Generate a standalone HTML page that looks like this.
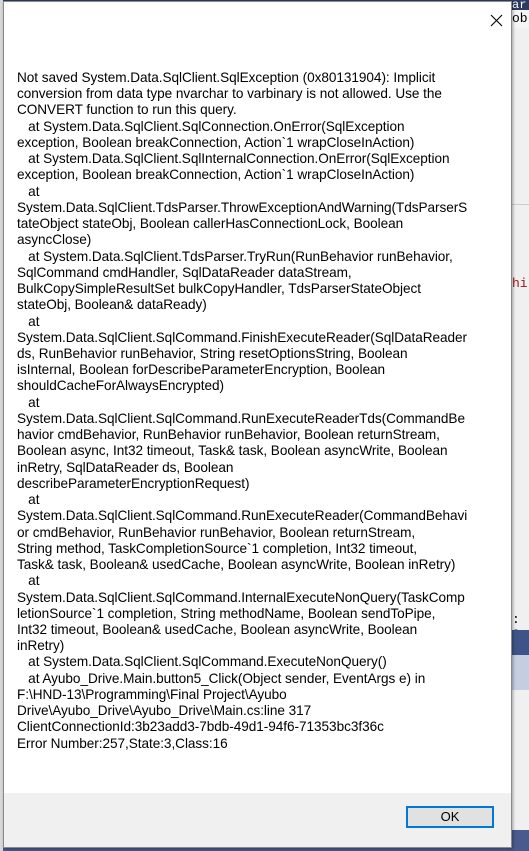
<!DOCTYPE html>
<html><head><meta charset="utf-8"><style>
html,body{margin:0;padding:0;width:529px;height:851px;overflow:hidden;background:#f0f0f0;position:relative}
.bg{position:absolute}
.dlg{position:absolute;left:3px;top:1px;width:509px;height:847px;background:#fff;border:1px solid #8a8a8a;box-sizing:border-box;box-shadow:1px 1px 3px rgba(0,0,0,.35)}
.foot{position:absolute;left:0;right:0;bottom:0;height:54px;background:#f0f0f0}
.ok{position:absolute;left:402px;top:13px;width:88px;height:22px;border:2px solid #0078d7;background:#e1e1e1;box-sizing:border-box;font:13px "Liberation Sans",sans-serif;text-align:center;line-height:18px;color:#000}
.txt{position:absolute;left:13px;top:68px;font:13.6px "Liberation Sans",sans-serif;line-height:16.24px;color:#000;white-space:pre;letter-spacing:-0.05px}
</style></head><body>
<div class="bg" style="left:0;top:0;width:529px;height:10px;background:#2d3b63"></div>
<div class="bg" style="left:512px;top:10px;width:17px;height:18px;background:#f5f5f5;font:13px 'Liberation Mono',monospace;line-height:18px;overflow:hidden">ob</div>
<div class="bg" style="left:512px;top:0;width:17px;height:10px;font:12px 'Liberation Mono',monospace;color:#fff;line-height:10px;overflow:hidden">ar</div>
<div class="bg" style="left:512px;top:204px;width:17px;height:1px;background:#ccc"></div>
<div class="bg" style="left:512px;top:276px;width:17px;font:13px 'Liberation Mono',monospace;color:#a31515;overflow:hidden">hi</div>
<div class="bg" style="left:512px;top:612px;width:17px;font:13px 'Liberation Mono',monospace;overflow:hidden">: 2</div>
<div class="bg" style="left:512px;top:630px;width:17px;height:25px;background:#3e5488"></div>
<div class="bg" style="left:512px;top:655px;width:17px;height:35px;background:#c5cde0"></div>
<div class="bg" style="left:512px;top:830px;width:17px;height:21px;background:#4a5a8c"></div>
<div class="bg" style="left:0;top:848px;width:529px;height:3px;background:#4a5a8c"></div>
<div class="bg" style="left:0;top:0;width:3px;height:851px;background:#d8d8d8"></div>
<div class="dlg">
<svg style="position:absolute;left:486px;top:12px" width="13" height="13" viewBox="0 0 13 13"><path d="M1 1L12 12M12 1L1 12" stroke="#000" stroke-width="1.1"/></svg>
<div class="txt">Not saved System.Data.SqlClient.SqlException (0x80131904): Implicit
conversion from data type nvarchar to varbinary is not allowed. Use the
CONVERT function to run this query.
   at System.Data.SqlClient.SqlConnection.OnError(SqlException
exception, Boolean breakConnection, Action`1 wrapCloseInAction)
   at System.Data.SqlClient.SqlInternalConnection.OnError(SqlException
exception, Boolean breakConnection, Action`1 wrapCloseInAction)
   at
System.Data.SqlClient.TdsParser.ThrowExceptionAndWarning(TdsParserS
tateObject stateObj, Boolean callerHasConnectionLock, Boolean
asyncClose)
   at System.Data.SqlClient.TdsParser.TryRun(RunBehavior runBehavior,
SqlCommand cmdHandler, SqlDataReader dataStream,
BulkCopySimpleResultSet bulkCopyHandler, TdsParserStateObject
stateObj, Boolean&amp; dataReady)
   at
System.Data.SqlClient.SqlCommand.FinishExecuteReader(SqlDataReader
ds, RunBehavior runBehavior, String resetOptionsString, Boolean
isInternal, Boolean forDescribeParameterEncryption, Boolean
shouldCacheForAlwaysEncrypted)
   at
System.Data.SqlClient.SqlCommand.RunExecuteReaderTds(CommandBe
havior cmdBehavior, RunBehavior runBehavior, Boolean returnStream,
Boolean async, Int32 timeout, Task&amp; task, Boolean asyncWrite, Boolean
inRetry, SqlDataReader ds, Boolean
describeParameterEncryptionRequest)
   at
System.Data.SqlClient.SqlCommand.RunExecuteReader(CommandBehavi
or cmdBehavior, RunBehavior runBehavior, Boolean returnStream,
String method, TaskCompletionSource`1 completion, Int32 timeout,
Task&amp; task, Boolean&amp; usedCache, Boolean asyncWrite, Boolean inRetry)
   at
System.Data.SqlClient.SqlCommand.InternalExecuteNonQuery(TaskComp
letionSource`1 completion, String methodName, Boolean sendToPipe,
Int32 timeout, Boolean&amp; usedCache, Boolean asyncWrite, Boolean
inRetry)
   at System.Data.SqlClient.SqlCommand.ExecuteNonQuery()
   at Ayubo_Drive.Main.button5_Click(Object sender, EventArgs e) in
F:\HND-13\Programming\Final Project\Ayubo
Drive\Ayubo_Drive\Ayubo_Drive\Main.cs:line 317
ClientConnectionId:3b23add3-7bdb-49d1-94f6-71353bc3f36c
Error Number:257,State:3,Class:16</div>
<div class="foot"><div class="ok">OK</div></div>
</div>
</body></html>
